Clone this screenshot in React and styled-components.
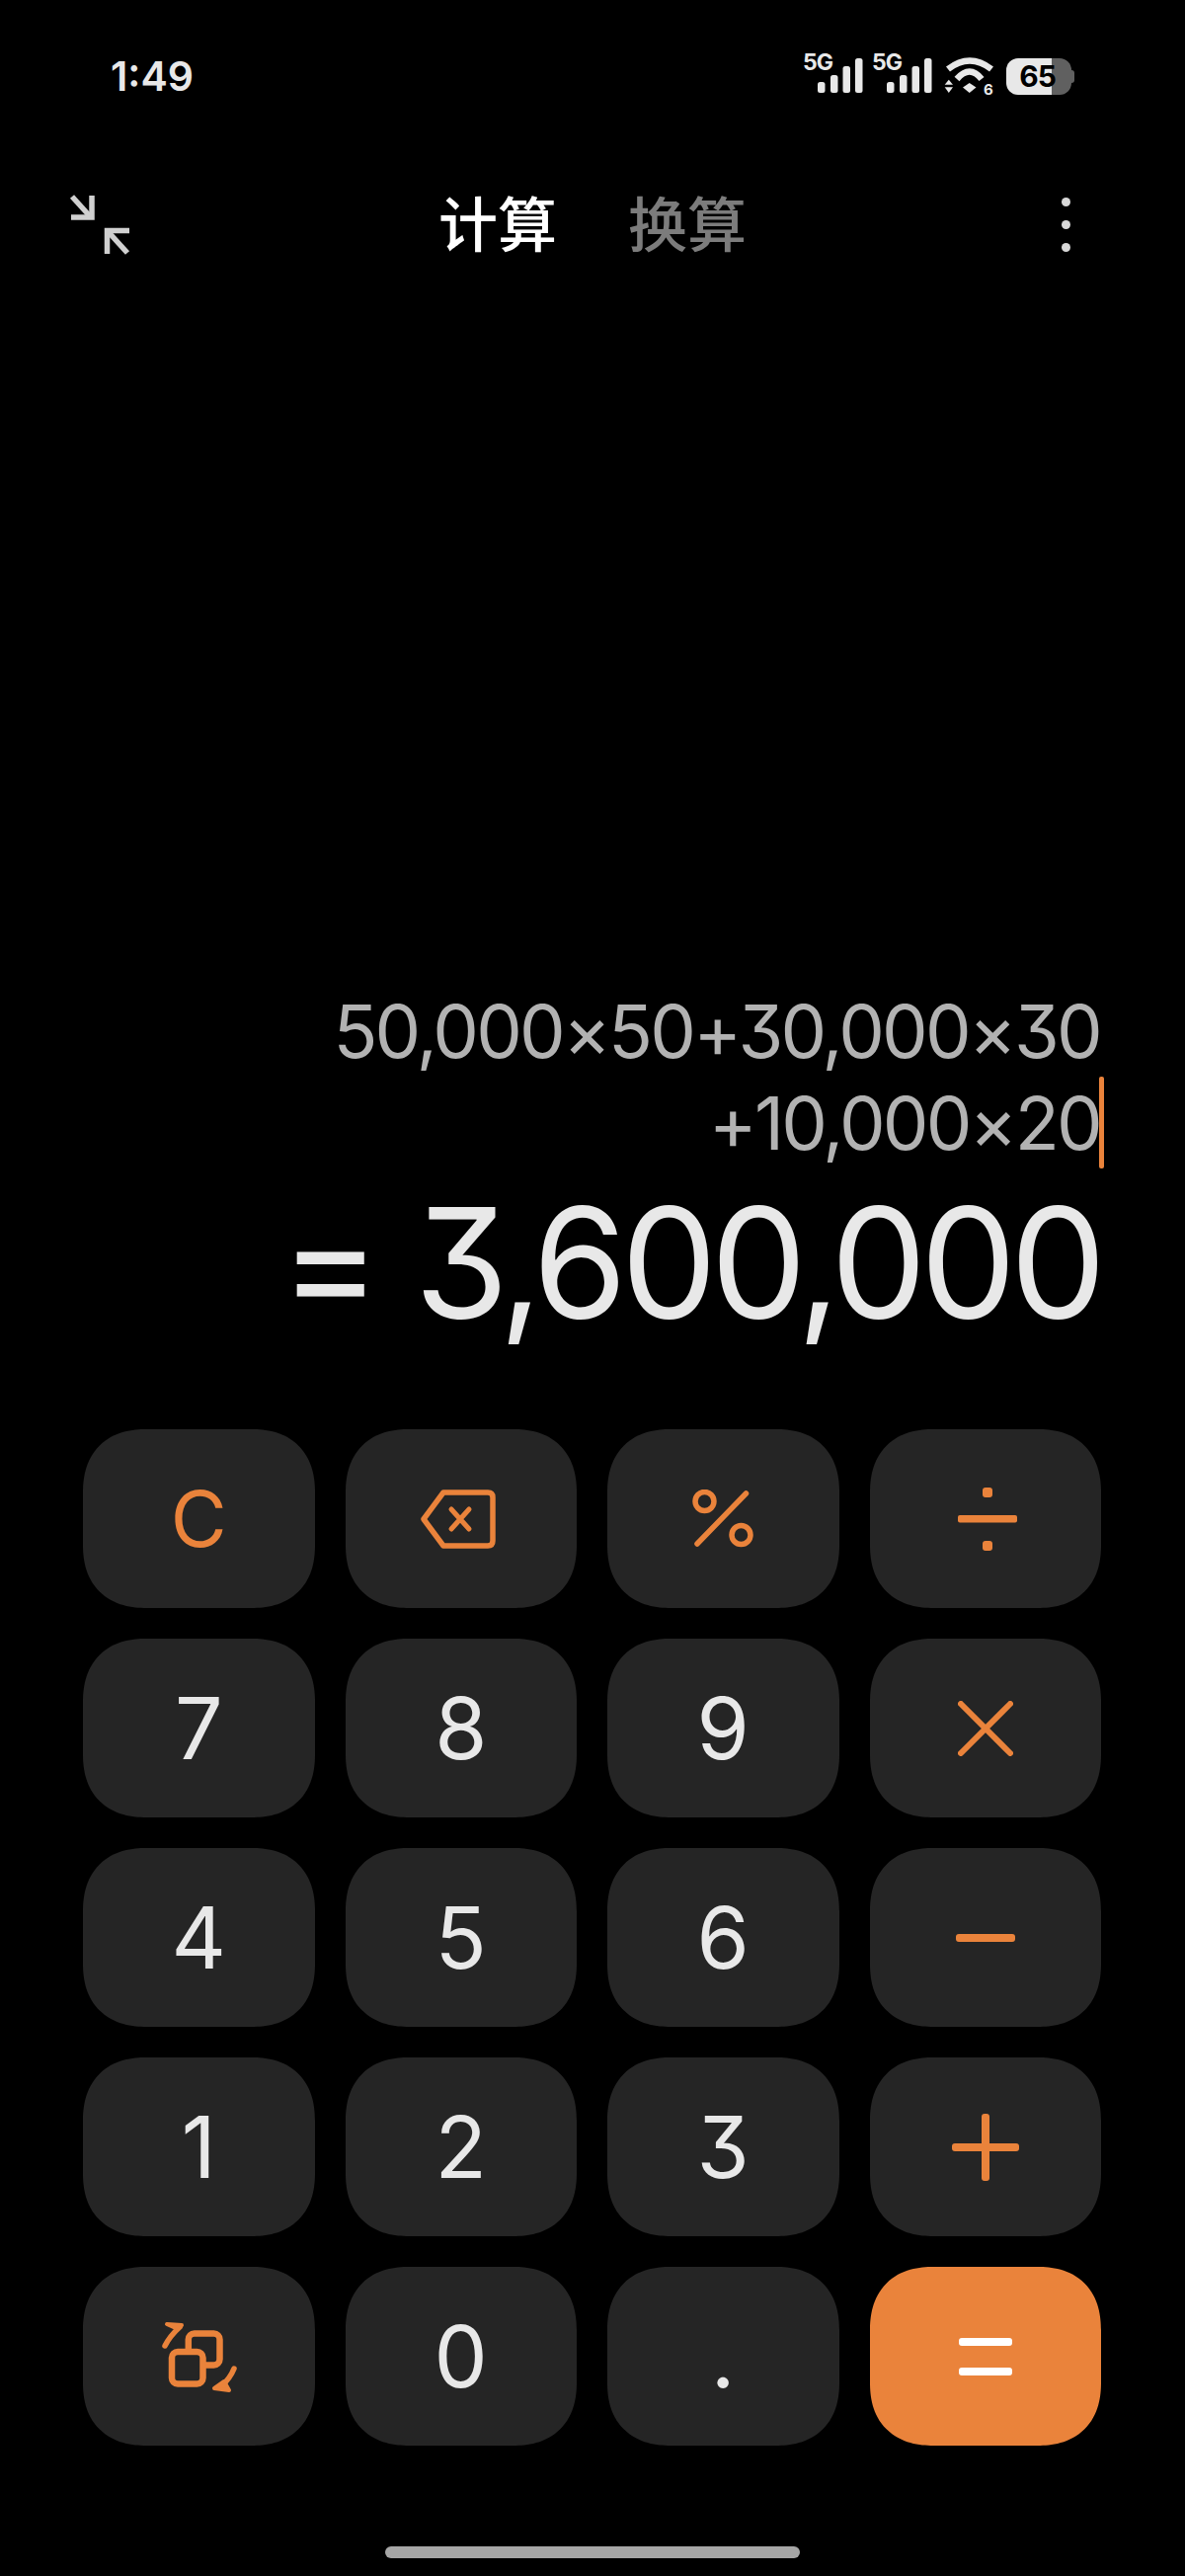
import React from 'react';
import styled, { createGlobalStyle } from 'styled-components';

const ORANGE = '#ea833b';

const GlobalStyle = createGlobalStyle`
	* {
		box-sizing: border-box;
	}
	html,
	body {
		margin: 0;
		padding: 0;
		background-color: #000;
	}
`;

const Page = styled.div`
	display: flex;
	flex-direction: column;
	width: 1200px;
	height: 2608px;
	overflow: hidden;
	font-family: Inter, Roboto, sans-serif;
	font-feature-settings: 'cv09';
	background-color: #000;
`;

const StatusBar = styled.div`
	display: flex;
	align-items: center;
	justify-content: space-between;
	height: 154px;
	padding: 0 112px;
`;

const Time = styled.span`
	font-weight: 600;
	font-size: 41px;
	color: #e8e8e8;
`;

const StatusIcons = styled.div`
	display: flex;
	align-items: center;
	gap: 8px;
`;

const WifiIcon = styled.svg`
	margin: 0 4px;
	overflow: visible;
`;

const Battery = styled.div`
	position: relative;
	display: flex;
	align-items: center;
	justify-content: flex-end;
	width: 66px;
	height: 37px;
	margin-right: 3px;
	padding-right: 16px;
	font-weight: 700;
	font-size: 30px;
	letter-spacing: -1px;
	color: #000;
	background: linear-gradient(to right, #e8e8e8 70%, #606060 70%);
	border-radius: 12px;

	&::after {
		content: '';
		position: absolute;
		top: 12px;
		right: -3px;
		width: 3px;
		height: 13px;
		background-color: #606060;
		border-radius: 0 3px 3px 0;
	}
`;

const Nav = styled.nav`
	display: grid;
	grid-template-columns: 1fr auto 1fr;
	align-items: center;
	height: 146px;
	padding: 0 70px;
`;

const Tabs = styled.div`
	display: flex;
	gap: 72px;
	margin-bottom: 6px;
`;

const Tab = styled.span`
	font-family: 'Noto Sans CJK SC', sans-serif;
	font-weight: 500;
	font-size: 60px;
	line-height: 1;
	color: ${(props) => (props.$active ? '#fff' : '#7c7c7c')};
`;

const MoreButton = styled.div`
	display: flex;
	flex-direction: column;
	gap: 14px;
	justify-self: end;
	margin-right: 46px;

	> i {
		display: block;
		width: 9px;
		height: 9px;
		background-color: #d8d8d8;
		border-radius: 50%;
	}
`;

const Display = styled.section`
	display: flex;
	flex: 1;
	flex-direction: column;
	align-items: flex-end;
	justify-content: flex-end;
	padding: 0 86px 84px 0;
`;

const Expression = styled.div`
	font-weight: 400;
	font-size: 74px;
	line-height: 93px;
	letter-spacing: -2.8px;
	text-align: right;
	white-space: nowrap;
	color: #b2b2b2;
`;

const LastLine = styled.div`
	position: relative;
`;

const Caret = styled.span`
	position: absolute;
	top: -1px;
	right: -4px;
	width: 5px;
	height: 93px;
	background-color: ${ORANGE};
	border-radius: 2px;
`;

const Result = styled.div`
	display: flex;
	gap: 40px;
	margin-top: 9px;
	font-weight: 400;
	font-size: 154px;
	line-height: 170px;
	letter-spacing: -6.2px;
	white-space: nowrap;
	color: #e8e8e8;
`;

const Keypad = styled.div`
	display: grid;
	grid-template-columns: repeat(4, 1fr);
	grid-auto-rows: 181px;
	gap: 31px;
	padding: 0 85px 0 84px;
`;

const Key = styled.button`
	display: flex;
	align-items: center;
	justify-content: center;
	padding: 0;
	font-family: inherit;
	font-feature-settings: inherit;
	font-weight: 380;
	font-size: ${(props) => props.$size || 86}px;
	color: ${(props) => (props.$orange ? ORANGE : '#e8e8e8')};
	background-color: ${(props) => (props.$fill ? ORANGE : '#252525')};
	border: none;
	border-radius: 64px;
	corner-shape: superellipse(1.2);
`;

const HomeArea = styled.div`
	display: flex;
	justify-content: center;
	height: 132px;
	padding-top: 102px;
`;

const HomeBar = styled.div`
	width: 420px;
	height: 12px;
	background-color: #a6a6a6;
	border-radius: 6px;
`;

const Signal = () => (
	<svg width="62" height="56" viewBox="0 0 62 56">
		<text x="0" y="22" fontFamily="Inter" fontWeight="700" fontSize="23" letterSpacing="-1" fill="#e8e8e8">
			5G
		</text>
		<rect x="15" y="34" width="7.5" height="11" rx="2.5" fill="#e8e8e8" />
		<rect x="28" y="27" width="7.5" height="18" rx="2.5" fill="#e8e8e8" />
		<rect x="40.5" y="18" width="7.5" height="27" rx="2.5" fill="#e8e8e8" />
		<rect x="53" y="10" width="7.5" height="35" rx="2.5" fill="#e8e8e8" />
	</svg>
);

const Wifi = () => (
	<WifiIcon width="50" height="38" viewBox="0 0 50 38">
		<g fill="none" stroke="#e8e8e8" strokeWidth="6.5">
			<path d="M3 12Q25 -5 47 12" />
			<path d="M12 22Q25 7 37 22" />
		</g>
		<g fill="#e8e8e8">
			<path d="M24.7 26L31.5 30.5 24.7 36 18 30.5Z" />
			<path d="M-.3 27.7H8L3.8 22.7Z" />
			<path d="M-.3 30.3H8L3.8 36Z" />
			<text x="39" y="38" fontFamily="Inter" fontWeight="700" fontSize="15">
				6
			</text>
		</g>
	</WifiIcon>
);

const Collapse = () => (
	<svg width="62" height="63" viewBox="0 0 62 63" fill="none" stroke="#d0d0d0" strokeWidth="5.5">
		<path d="M3 3L22 24" />
		<path d="M23 2V24H2" />
		<path d="M59 60L39 38" />
		<path d="M38.5 61V37.5H61" />
	</svg>
);

const iconProps = { fill: 'none', stroke: 'currentColor', strokeLinecap: 'round', strokeLinejoin: 'round' };

const Backspace = () => (
	<svg width="76" height="60" viewBox="0 0 76 60" {...iconProps} strokeWidth="5.5" style={{ marginRight: 5 }}>
		<path d="M23 3H68Q73 3 73 8V52Q73 57 68 57H23L3 30Z" />
		<path d="M31 20L49 40M49 20L31 40" strokeWidth="5" />
	</svg>
);

const Percent = () => (
	<svg width="62" height="60" viewBox="0 0 62 60" {...iconProps} strokeWidth="5.5">
		<circle cx="12.5" cy="12" r="9.5" />
		<circle cx="49.5" cy="46" r="9.5" />
		<path d="M54.5 4L5 55" />
	</svg>
);

const Divide = () => (
	<svg width="60" height="64" viewBox="0 0 60 64" fill="currentColor" style={{ marginLeft: 4 }}>
		<rect x="25" y="0" width="10" height="10" rx="3" />
		<rect x="0" y="28" width="60" height="7.5" rx="2" />
		<rect x="25" y="54" width="10" height="10" rx="3" />
	</svg>
);

const Times = () => (
	<svg width="56" height="56" viewBox="0 0 56 56" {...iconProps} strokeWidth="6">
		<path d="M3 3L53 53M53 3L3 53" />
	</svg>
);

const Minus = () => (
	<svg width="60" height="8" viewBox="0 0 60 8" fill="currentColor">
		<rect width="60" height="8" rx="3" />
	</svg>
);

const Plus = () => (
	<svg width="68" height="68" viewBox="0 0 68 68" fill="currentColor">
		<rect x="0" y="30" width="68" height="8" rx="3" />
		<rect x="30" y="0" width="8" height="68" rx="3" />
	</svg>
);

const Equals = () => (
	<svg width="54" height="38" viewBox="0 0 54 38" fill="#fff">
		<rect y="0" width="54" height="8" rx="3" />
		<rect y="30" width="54" height="8" rx="3" />
	</svg>
);

const Swap = () => (
	<svg width="84" height="80" viewBox="0 0 84 80" {...iconProps} strokeWidth="6.5" style={{ marginRight: 3 }}>
		<rect x="32.8" y="16.5" width="31.7" height="32" rx="6" />
		<rect x="16" y="35" width="31.5" height="32.5" rx="6" fill="#252525" />
		<path d="M9 29Q14 19 24 10" strokeWidth="5.5" />
		<path d="M11 7L26 8L22 12Z" fill="currentColor" strokeWidth="4" />
		<path d="M79 52Q75 62 66 70" strokeWidth="5.5" />
		<path d="M59 72L74 74L69 65Z" fill="currentColor" strokeWidth="4" />
	</svg>
);

const App = () => (
	<Page>
		<GlobalStyle />
		<StatusBar>
			<Time>1:49</Time>
			<StatusIcons>
				<Signal />
				<Signal />
				<Wifi />
				<Battery>65</Battery>
			</StatusIcons>
		</StatusBar>

		<Nav>
			<Collapse />
			<Tabs>
				<Tab $active>计算</Tab>
				<Tab>换算</Tab>
			</Tabs>
			<MoreButton>
				<i />
				<i />
				<i />
			</MoreButton>
		</Nav>

		<Display>
			<Expression>
				<div>50,000×50+30,000×30</div>
				<LastLine>
					+10,000×20
					<Caret />
				</LastLine>
			</Expression>
			<Result>
				<span>=</span>
				<span>3,600,000</span>
			</Result>
		</Display>

		<Keypad>
			<Key $orange $size={78}>
				C
			</Key>
			<Key $orange>
				<Backspace />
			</Key>
			<Key $orange>
				<Percent />
			</Key>
			<Key $orange>
				<Divide />
			</Key>
			<Key>7</Key>
			<Key>8</Key>
			<Key>9</Key>
			<Key $orange>
				<Times />
			</Key>
			<Key>4</Key>
			<Key>5</Key>
			<Key>6</Key>
			<Key $orange>
				<Minus />
			</Key>
			<Key>1</Key>
			<Key>2</Key>
			<Key>3</Key>
			<Key $orange>
				<Plus />
			</Key>
			<Key $orange>
				<Swap />
			</Key>
			<Key>0</Key>
			<Key>.</Key>
			<Key $fill>
				<Equals />
			</Key>
		</Keypad>

		<HomeArea>
			<HomeBar />
		</HomeArea>
	</Page>
);

export default App;
